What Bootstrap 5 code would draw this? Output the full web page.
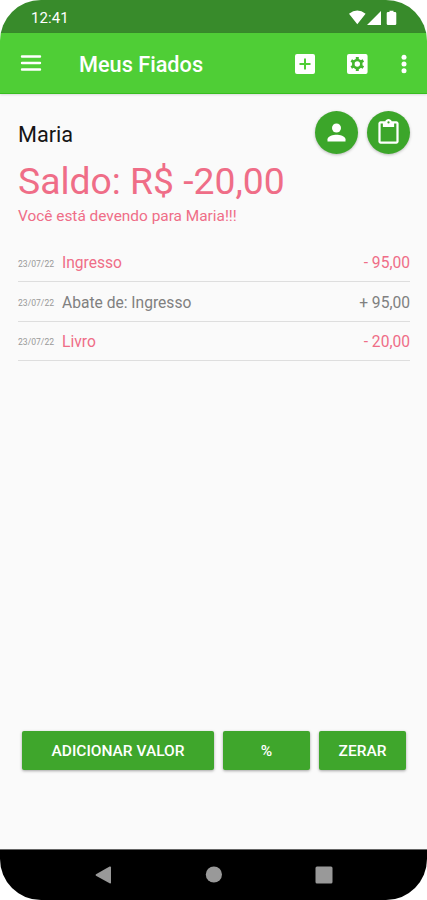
<!DOCTYPE html>
<html lang="pt-BR">
<head>
<meta charset="utf-8">
<meta name="viewport" content="width=device-width, initial-scale=1">
<title>Meus Fiados</title>
<link href="https://cdn.jsdelivr.net/npm/bootstrap@5.3.0/dist/css/bootstrap.min.css" rel="stylesheet">
<style>
  body { font-family: Roboto, "Liberation Sans", sans-serif; background: #fff; }
  svg { display: block; flex: none; }
  .phone { width: 427px; height: 900px; border-radius: 41px; background: #fafafa; }
  .status { height: 33px; background: #388b2b; padding: 3px 29px 0 31px; font-size: 15px; letter-spacing: .1px; }
  .appbar { height: 61px; background: #4fce36; padding: 0 11px 0 19px; border-bottom: 1px solid #38bd20; box-shadow: 0 1px 2px rgba(0,0,0,.12); }
  .app-title { font-size: 21.7px; font-weight: 500; margin-left: 36px; padding-top: 4px; line-height: 1; }
  .tools { gap: 24px; padding-top: 1px; }
  .gear { margin-left: 8px; }
  .person { padding: 17px 17px 0 18px; }
  .person-name { font-size: 21.7px; color: #151515; line-height: 47px; height: 43px; }
  .round-btn { width: 43px; height: 43px; background: #3ca62a; box-shadow: 0 1px 3px rgba(0,0,0,.25); }
  .round-btn + .round-btn { margin-left: 9px; }
  .pink { color: #ef6d87; }
  .balance { font-size: 37.3px; line-height: 44px; padding-top: 5px; }
  .notice { font-size: 15.4px; line-height: 20px; margin-top: 3px; }
  .entries { padding: 17px 17px 0 18px; }
  .entry { height: 39.3px; padding-top: 4px; border-bottom: 1px solid #dedede; font-size: 15.6px; color: #808080; }
  .entry-date { width: 44px; font-size: 8.6px; color: #999; }
  .actions { padding: 0 21px 0 22px; margin-bottom: 79px; gap: 9px; }
  .action { height: 39px; background: #3fa62c; border-radius: 2px; font-size: 15.5px; font-weight: 500; box-shadow: 0 1px 3px rgba(0,0,0,.35); }
  .action span { display: block; padding-top: 3px; }
  .action-wide { width: 192px; }
  .navkeys { height: 51px; border-top: 1px solid #666; padding: 0 94px 1px 95px; }
</style>
</head>
<body>
<main class="phone d-flex flex-column overflow-hidden">
  <div class="status d-flex align-items-center justify-content-between text-white">
    <span>12:41</span>
    <svg width="49" height="16" viewBox="0 0 49 16" fill="#fff"><path d="M0 3.700Q8.300-2.700 16.600 3.700L8.300 14.200ZM18 15 32 1V15ZM40.500 2V.7h4V2H46q1.300 0 1.300 1.300v10.400Q47.300 15 46 15h-7q-1.300 0-1.300-1.300V3.300Q37.700 2 39 2Z"/></svg>
  </div>
  <header class="appbar d-flex align-items-center text-white">
    <svg width="24" height="24" viewBox="0 0 24 24" stroke="#fff" stroke-width="2.400" stroke-linecap="round"><path d="M3 5.500H21M3 12H21M3 18.500H21"/></svg>
    <h1 class="app-title mb-0">Meus Fiados</h1>
    <div class="tools d-flex align-items-center ms-auto">
      <svg width="20" height="20" viewBox="0 0 20 20" fill="#fff" fill-rule="evenodd"><path d="M2 0H18Q20 0 20 2V18Q20 20 18 20H2Q0 20 0 18V2Q0 0 2 0ZM9 4.500V9H4.500v2H9v4.500h2V11h4.500V9H11V4.500Z"/></svg>
      <svg class="gear" width="21" height="20" viewBox="0 0 21 20"><rect width="20.600" height="20" rx="2" fill="#fff"/><circle cx="10.300" cy="10" r="5.300" fill="#42b62d"/><path d="M10.300 3V17M4.240 6.500 16.360 13.500M16.360 6.500 4.240 13.500" stroke="#42b62d" stroke-width="3"/><circle cx="10.300" cy="10" r="2.700" fill="#fff"/></svg>
      <svg width="24" height="24" viewBox="0 0 24 24" fill="#fff"><circle cx="12" cy="5.300" r="2.500"/><circle cx="12" cy="12" r="2.500"/><circle cx="12" cy="18.700" r="2.500"/></svg>
    </div>
  </header>
  <section class="person">
    <div class="d-flex align-items-start">
      <h2 class="person-name fw-normal mb-0 me-auto">Maria</h2>
      <button class="round-btn btn rounded-circle border-0 p-0 d-flex align-items-center justify-content-center" aria-label="Pessoa">
        <svg width="27" height="27" viewBox="0 0 24 24" fill="#fff"><circle cx="12" cy="8" r="4"/><path d="M4 20V18C4 15.300 9.300 14 12 14s8 1.300 8 4v2Z"/></svg>
      </button>
      <button class="round-btn btn rounded-circle border-0 p-0 d-flex align-items-center justify-content-center" aria-label="Anotações">
        <svg width="27" height="27" viewBox="0 0 24 24" fill="#fff"><path d="M19 2h-4.180C14.400.84 13.300 0 12 0S9.600.84 9.180 2H5C3.900 2 3 2.900 3 4v16c0 1.100.9 2 2 2h14c1.100 0 2-.9 2-2V4c0-1.100-.9-2-2-2ZM12 2a1 1 0 1 1 0 2 1 1 0 0 1 0-2Zm7 18H5V4h2v3h10V4h2Z"/></svg>
      </button>
    </div>
    <div class="balance pink">Saldo: R$ -20,00</div>
    <div class="notice pink">Você está devendo para Maria!!!</div>
  </section>
  <section class="entries">
    <div class="entry d-flex align-items-center"><span class="entry-date">23/07/22</span><span class="pink">Ingresso</span><span class="pink ms-auto">- 95,00</span></div>
    <div class="entry d-flex align-items-center"><span class="entry-date">23/07/22</span><span>Abate de: Ingresso</span><span class="ms-auto">+ 95,00</span></div>
    <div class="entry d-flex align-items-center"><span class="entry-date">23/07/22</span><span class="pink">Livro</span><span class="pink ms-auto">- 20,00</span></div>
  </section>
  <div class="actions d-flex mt-auto">
    <button class="action action-wide btn text-white border-0 p-0"><span>ADICIONAR VALOR</span></button>
    <button class="action btn text-white border-0 p-0 col"><span>%</span></button>
    <button class="action btn text-white border-0 p-0 col"><span>ZERAR</span></button>
  </div>
  <nav class="navkeys bg-black d-flex align-items-center justify-content-between">
    <svg width="17" height="18" viewBox="0 0 17 18" fill="#999"><path d="M1 8.300 14.600.5Q16 0 16 1.500V16.500Q16 18 14.600 17.300L1 9.700Q0 9 1 8.300Z"/></svg>
    <svg width="17" height="17" viewBox="0 0 17 17" fill="#999"><circle cx="8.900" cy="8.500" r="8.100"/></svg>
    <svg width="18" height="18" viewBox="0 0 18 18" fill="#999"><rect x=".5" y=".5" width="17" height="17" rx="1.500"/></svg>
  </nav>
</main>
<script src="https://cdn.jsdelivr.net/npm/bootstrap@5.3.0/dist/js/bootstrap.bundle.min.js"></script>
</body>
</html>
